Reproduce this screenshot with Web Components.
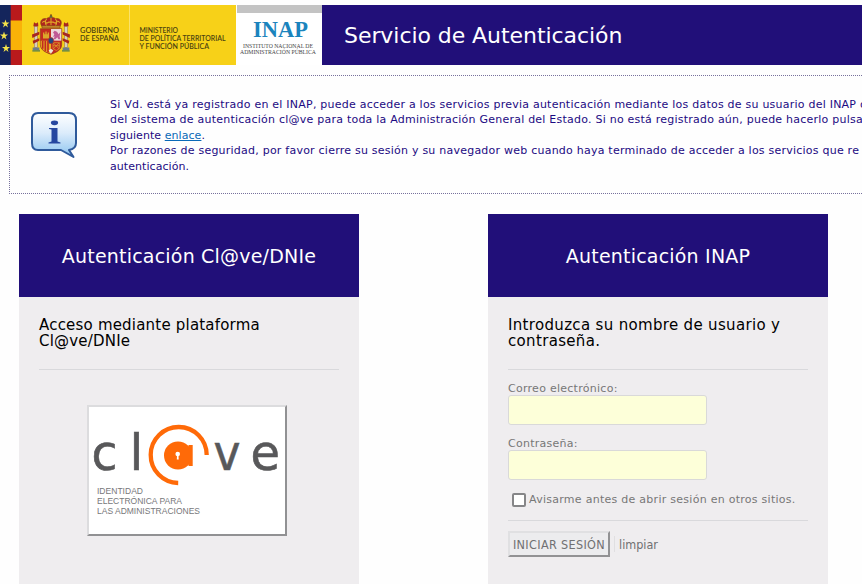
<!DOCTYPE html>
<html lang="es">
<head>
<meta charset="utf-8">
<title>Servicio de Autenticación</title>
<style>
  html { overflow: hidden; }
  body {
    margin: 0;
    padding-top: 5px;
    background: #fefefe;
    font-family: "DejaVu Sans", sans-serif;
    --navy: #210f79;
    --panel: #efedef;
    --rule: #d9d9dc;
  }
  main {
    display: flex;
    gap: 129px;
    margin: 20px 0 0 19px;
  }
  .tight { letter-spacing: .06px; }
</style>
</head>
<body>

<inap-header>Servicio de Autenticación</inap-header>

<inap-notice>Si Vd. está ya registrado en el INAP, puede acceder a los servicios previa autenticación mediante los datos de su usuario del INAP o<br>del sistema de autenticación cl@ve para toda la Administración General del Estado. Si no está registrado aún, puede hacerlo pulsan<br><span class="tight">siguiente </span><a class="tight" href="#">enlace</a>.<br>Por razones de seguridad, por favor cierre su sesión y su navegador web cuando haya terminado de acceder a los servicios que re<br><span class="tight">autenticación.</span></inap-notice>

<main>
  <inap-panel>
    <span slot="title">Autenticación Cl@ve/DNIe</span>
    <span slot="intro">Acceso mediante plataforma<br>Cl@ve/DNIe</span>
    <clave-button></clave-button>
  </inap-panel>
  <inap-panel>
    <span slot="title">Autenticación INAP</span>
    <span slot="intro" style="letter-spacing: .33px">Introduzca su nombre de usuario y<br>contraseña.</span>
    <inap-login></inap-login>
  </inap-panel>
</main>

<script>
class InapElement extends HTMLElement {
    constructor() {
        super()
        let s = this.attachShadow({mode: 'open'})
        s.innerHTML = this.constructor.template
    }
}

class Inap_Arms extends InapElement {
    static template = `
<style>
  :host { display: block; width: 40px; height: 41px; }
  svg { display: block; }
</style>
<svg width="40" height="41" viewBox="0 0 120 120" preserveAspectRatio="none">
  <!-- pillars of Hercules -->
  <g fill="#d8cfc0" stroke="#8c6a55" stroke-width="1.5">
    <rect x="10" y="36" width="9" height="62"/>
    <rect x="101" y="36" width="9" height="62"/>
  </g>
  <g fill="#a8271f">
    <path d="M7 36l2-12 6 4 6-4 1 12zM98 36l1-12 6 4 6-4 2 12z"/>
    <path d="M3 60l22-8v8L4 70zM117 60l-22-8v8l21 10zM5 78l20-7v7L7 87zM115 78l-20-7v7l18 9z"/>
  </g>
  <path d="M5 98h20v7H5zM95 98h20v7H95z" fill="#6d7d8c"/>
  <path d="M4 106h23v4H4zM93 106h23v4H93z" fill="#4a7a55"/>
  <!-- crown -->
  <path d="M33 37C22 20 36 10 47 14c4-6 22-6 26 0 11-4 25 6 14 23z" fill="#b0261e" stroke="#8c4a16" stroke-width="2"/>
  <path d="M60 11v23M47 15c-7 6-4 14 0 20M73 15c7 6 4 14 0 20M34 25q7-8 13 2 13-8 26 0 6-10 13-2" fill="none" stroke="#dfa629" stroke-width="3"/>
  <circle cx="60" cy="7" r="4" fill="#5a6b3e"/>
  <path d="M60 0v6M57 3h6" stroke="#8c4a16" stroke-width="2"/>
  <path d="M33 34h54v7H33z" fill="#c48b2b" stroke="#7a3515" stroke-width="1.5"/>
  <!-- quartered shield -->
  <path d="M28 43h64v46c0 17-16 23-32 29-16-6-32-12-32-29z" fill="#c32a20" stroke="#8c3a20" stroke-width="2"/>
  <path d="M60 44h31v34H60z" fill="#ecd9db"/>
  <path d="M29 78h31v38C45 111 29 105 29 89z" fill="#e6ae22"/>
  <path d="M35 78v24M43 78v31M51 78v35" stroke="#c32a20" stroke-width="5"/>
  <path d="M36 72V54h4v5h3v-8h4v8h3v-5h4v18z" fill="#dca62b"/>
  <path d="M66 54l5-5 7 3 5 7 5-6-2 13 2 8h-6l-3-6-6 6h-5l3-9-5 2 4-8z" fill="#c05a95"/>
  <path d="M66 84h19v17l-9 6-10-6zM66 84l19 19M85 84l-19 19M66 93h19" fill="none" stroke="#dca62b" stroke-width="2"/>
  <path d="M53 107l7-5 7 5-7 9z" fill="#eee5d8"/>
  <ellipse cx="60" cy="78" rx="8" ry="9" fill="#23477f" stroke="#b53124" stroke-width="2"/>
</svg>
`
}

class Inap_Header extends InapElement {
    static template = `
<style>
  :host {
    display: flex;
    height: 60px;
    background: var(--navy);
    color: #fff;
  }
  svg { display: block; flex: none; }
  .gov {
    display: flex;
    flex: none;
    align-items: center;
    width: 214px;
    background: #f7d118;
  }
  inap-arms { flex: none; margin: -2px 0 0 9px; }
  .inap { background: #fff; }
  h1 {
    margin: 0 0 0 22px;
    font-size: 22px;
    font-weight: normal;
    line-height: 61px;
    white-space: nowrap;
    letter-spacing: -.06px;
  }
</style>
<svg width="22" height="60">
  <rect width="11" height="60" fill="#14255c"/>
  <rect x="10.7" width="11.3" height="60" fill="#b91a1c"/>
  <rect x="10.7" y="15.5" width="11.3" height="29.5" fill="#f9b208"/>
  <g fill="#f5e34b">
    <path d="M5.500 14.500l1 3h3L7 19.400l1 3-2.500-1.900L3 22.400l1-3-2.500-1.900h3z"/>
    <path d="M4 26.500l1 3h3l-2.500 1.900 1 3L4 32.500l-2.500 1.900 1-3L0 29.500h3z"/>
    <path d="M6 39l1 3h3l-2.500 1.900 1 3L6 45l-2.500 1.900 1-3L2 42h3z"/>
  </g>
</svg>
<div class="gov">
  <inap-arms></inap-arms>
  <svg width="165" height="60" font-family="Lato, sans-serif" font-weight="600" font-size="7.2" fill="#4b4310">
    <text x="9" y="27.6" textLength="39" lengthAdjust="spacingAndGlyphs">GOBIERNO</text>
    <text x="9" y="35.6" textLength="39" lengthAdjust="spacingAndGlyphs">DE ESPAÑA</text>
    <path d="M58.5 0v60" stroke="#fbe26a"/>
    <text x="68.5" y="28" textLength="38.5" lengthAdjust="spacingAndGlyphs">MINISTERIO</text>
    <text x="68.5" y="35.9" textLength="86" lengthAdjust="spacingAndGlyphs">DE POLÍTICA TERRITORIAL</text>
    <text x="68.5" y="43.6" textLength="69.5" lengthAdjust="spacingAndGlyphs">Y FUNCIÓN PÚBLICA</text>
  </svg>
</div>
<svg class="inap" width="86" height="60" font-family="Liberation Serif, serif">
  <rect x="1" width="85" height="8" fill="#c3c3c3"/>
  <text x="17" y="32" font-size="23" font-weight="bold" fill="#1b84bd" textLength="55" lengthAdjust="spacingAndGlyphs">INAP</text>
  <g font-size="6.2" fill="#444">
    <text x="7" y="43.3" textLength="70" lengthAdjust="spacingAndGlyphs">INSTITUTO NACIONAL DE</text>
    <text x="4" y="49.3" textLength="76" lengthAdjust="spacingAndGlyphs">ADMINISTRACIÓN PÚBLICA</text>
  </g>
</svg>
<h1><slot></slot></h1>
`
}

class Inap_Notice extends InapElement {
    static template = `
<style>
  :host {
    display: flex;
    box-sizing: border-box;
    height: 119px;
    margin: 10px 0 0 9px;
    padding: 20px 0 0 20px;
    border: 1px dotted #77719c;
    border-right: 0;
    overflow: hidden;
    color: #1c0a82;
    font-size: 11px;
    letter-spacing: .23px;
    line-height: 15.5px;
    white-space: nowrap;
  }
  svg { flex: none; margin: 15px 31px 0 0; }
  p { flex: 1; min-width: 0; margin: 0; padding-top: .5px; overflow: hidden; }
  ::slotted(a) { color: #0a6ab8; }
</style>
<svg width="49" height="49">
  <defs>
    <linearGradient id="sky" x2="0" y2="1">
      <stop offset="0" stop-color="#fff"/>
      <stop offset=".45" stop-color="#dcecfb"/>
      <stop offset="1" stop-color="#8cc4f0"/>
    </linearGradient>
  </defs>
  <path d="M8 2h31q7 0 7 7v23q0 6-7 7l4.500 7L31 39H8q-6 0-6-7V9q0-7 6-7z" fill="url(#sky)" stroke="#2f5a9b" stroke-width="2" stroke-linejoin="round"/>
  <ellipse cx="24.500" cy="11.800" rx="3.600" ry="2.400" fill="#2647a0"/>
  <path d="M19 17h8.500v13.500l3 1v1H18.500v-1l3-1V18.500l-2.500-.5z" fill="#2647a0"/>
</svg>
<p><slot></slot></p>
`
}

class Inap_Panel extends InapElement {
    static template = `
<style>
  :host {
    display: block;
    flex: none;
    width: 340px;
    height: 390px;
    background: var(--panel);
  }
  h2 {
    margin: 0;
    height: 83px;
    background: var(--navy);
    color: #fff;
    font-size: 19px;
    font-weight: normal;
    letter-spacing: .2px;
    line-height: 85px;
    text-align: center;
  }
  .intro {
    height: 52px;
    margin: 0 20px;
    padding-top: 20px;
    border-bottom: 1px solid var(--rule);
    font-size: 15px;
    letter-spacing: .2px;
    line-height: 16px;
    white-space: nowrap;
  }
</style>
<h2><slot name="title"></slot></h2>
<div class="intro"><slot name="intro"></slot></div>
<slot></slot>
`
}

class Clave_Button extends InapElement {
    static template = `
<style>
  :host { display: block; padding: 35px 0 0 68px; }
  button {
    display: block;
    box-sizing: border-box;
    width: 200px;
    height: 131px;
    padding: 0;
    border: 2px solid;
    border-color: #dcdcde #919193 #919193 #dcdcde;
    background: #fff;
  }
  svg { display: block; }
</style>
<button>
  <svg width="196" height="127">
    <g font-family="DejaVu Sans, sans-serif" font-size="50" fill="#58585a" stroke="#58585a" stroke-width=".6">
      <text x="2.500" y="63" textLength="26" lengthAdjust="spacingAndGlyphs">c</text>
      <text x="40.500" y="63">l</text>
      <text x="124.500" y="63" textLength="27" lengthAdjust="spacingAndGlyphs">v</text>
      <text x="161.500" y="63" textLength="29.500" lengthAdjust="spacingAndGlyphs">e</text>
    </g>
    <path d="M117.700 48A28 28 0 1 0 89.200 76" fill="none" stroke="#ff6a08" stroke-width="4.300"/>
    <circle cx="89" cy="48.500" r="14" fill="#ff6a08"/>
    <path d="M95 39.500h4.500V38h4.200v21h-4.200v-1.500H95z" fill="#ff6a08"/>
    <circle cx="88.700" cy="47" r="2.300" fill="#fff"/>
    <path d="M88 48h1.500l.2 4.500h-1.900z" fill="#fff"/>
    <g font-family="Liberation Sans, sans-serif" font-size="8.400" fill="#77777a">
      <text x="8" y="86.500" textLength="46" lengthAdjust="spacingAndGlyphs">IDENTIDAD</text>
      <text x="8" y="96.700" textLength="85" lengthAdjust="spacingAndGlyphs">ELECTRÓNICA PARA</text>
      <text x="8" y="106.900" textLength="103" lengthAdjust="spacingAndGlyphs">LAS ADMINISTRACIONES</text>
    </g>
  </svg>
</button>
`
}

class Inap_Field extends InapElement {
    static template = `
<style>
  :host { display: block; height: 55px; }
  label { display: block; height: 15px; line-height: 19px; }
  input {
    display: block;
    box-sizing: border-box;
    width: 199px;
    height: 30px;
    margin-top: 1px;
    border: 1px solid #d9d9d9;
    border-radius: 3px;
    background: #fdffd9;
  }
</style>
<label><slot></slot></label>
<input>
`
}

class Inap_Login extends InapElement {
    static template = `
<style>
  :host {
    display: block;
    padding: 9px 20px 0;
    color: #777;
    font-size: 11px;
    letter-spacing: .27px;
    white-space: nowrap;
  }
  .warn {
    display: flex;
    align-items: center;
    box-sizing: border-box;
    height: 32px;
    padding-bottom: 10px;
    border-bottom: 1px solid var(--rule);
  }
  .warn input {
    appearance: none;
    box-sizing: border-box;
    width: 14px;
    height: 14px;
    margin: 0 3px 0 4px;
    border: 2px solid #868688;
    border-radius: 2px;
    background: #fff;
  }
  .warn label { margin-top: -1px; }
  .actions { display: flex; padding-top: 10px; }
  button {
    padding: 0;
    border: 0;
    background: none;
    color: #707072;
    font: 12.500px "DejaVu Sans Condensed", "DejaVu Sans", sans-serif;
  }
  .submit {
    width: 102px;
    height: 26px;
    border: 2px solid;
    border-color: #e0e0e2 #929294 #929294 #e0e0e2;
    background: #ececee;
    letter-spacing: .35px;
  }
  .reset {
    height: 16px;
    margin: 5px 0 0 4px;
    padding-left: 4px;
    border-left: 1px solid #e0dfe1;
  }
</style>
<inap-field>Correo electrónico:</inap-field>
<inap-field>Contraseña:</inap-field>
<div class="warn"><input type="checkbox" id="warn"><label for="warn">Avisarme antes de abrir sesión en otros sitios.</label></div>
<div class="actions">
  <button class="submit">INICIAR SESIÓN</button>
  <button class="reset">limpiar</button>
</div>
`
}

customElements.define('inap-arms', Inap_Arms)
customElements.define('inap-header', Inap_Header)
customElements.define('inap-notice', Inap_Notice)
customElements.define('inap-panel', Inap_Panel)
customElements.define('clave-button', Clave_Button)
customElements.define('inap-field', Inap_Field)
customElements.define('inap-login', Inap_Login)
</script>
</body>
</html>
